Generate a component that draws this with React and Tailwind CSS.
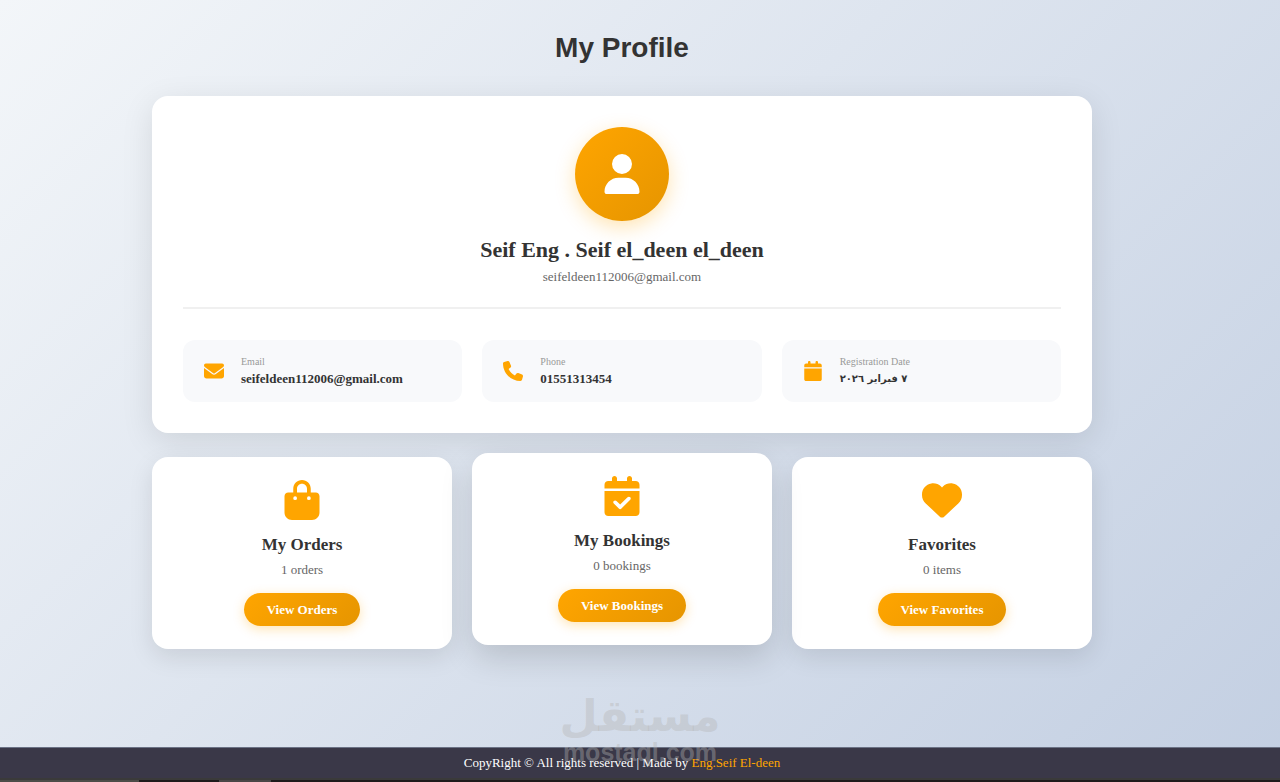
import React from 'react';
import {
  FaUser,
  FaEnvelope,
  FaPhone,
  FaCalendar,
  FaBagShopping,
  FaCalendarCheck,
  FaHeart,
} from 'react-icons/fa6';

const user = {
  name: 'Seif Eng . Seif el_deen el_deen',
  email: 'seifeldeen112006@gmail.com',
  phone: '01551313454',
  registered: '٧ فبراير ٢٠٢٦',
};

const infoItems = [
  { label: 'Email', value: user.email, icon: FaEnvelope },
  { label: 'Phone', value: user.phone, icon: FaPhone },
  { label: 'Registration Date', value: user.registered, icon: FaCalendar, arabic: true },
];

const actions = [
  { title: 'My Orders', count: '1 orders', button: 'View Orders', icon: FaBagShopping },
  { title: 'My Bookings', count: '0 bookings', button: 'View Bookings', icon: FaCalendarCheck, raised: true },
  { title: 'Favorites', count: '0 items', button: 'View Favorites', icon: FaHeart },
];

const InfoItem = ({ item }) => {
  const Icon = item.icon;
  return (
    <div className="flex items-center gap-4 rounded-xl bg-[#f8f9fb] px-5 py-[14px]">
      <div className="flex w-[22px] shrink-0 justify-center">
        <Icon size={20} className="text-[#ffa500]" />
      </div>
      <div className="min-w-0">
        <p className="text-[10px] leading-4 text-[#999]">{item.label}</p>
        {item.arabic ? (
          <p dir="rtl" className="text-left font-['DejaVu_Sans',sans-serif] text-[10px] leading-[18px] font-bold text-[#333]">
            {item.value}
          </p>
        ) : (
          <p className="text-[13px] leading-[18px] font-bold text-[#333]">{item.value}</p>
        )}
      </div>
    </div>
  );
};

const ActionCard = ({ action }) => {
  const Icon = action.icon;
  const state = action.raised
    ? '-translate-y-1 shadow-[0_12px_32px_rgba(0,0,0,0.15)]'
    : 'shadow-[0_8px_24px_rgba(0,0,0,0.1)]';
  return (
    <div className={`flex flex-col items-center rounded-2xl bg-white p-[23px] text-center ${state}`}>
      <Icon size={40} className="text-[#ffa500]" />
      <h3 className="mt-3 text-[17px] leading-[26px] font-bold text-[#333]">{action.title}</h3>
      <p className="mt-[3px] text-[13px] leading-[18px] text-[#666]">{action.count}</p>
      <button
        type="button"
        className="mt-[14px] cursor-pointer rounded-full bg-linear-135 from-[#ffa500] to-[#e69500] px-[23px] py-2 text-[13px] leading-[17px] font-bold text-white shadow-[0_3px_12px_rgba(255,165,0,0.3)]"
      >
        {action.button}
      </button>
    </div>
  );
};

const Watermark = () => (
  <div className="pointer-events-none absolute inset-x-0 bottom-4 flex flex-col items-center font-bold text-[#b4b4b4]/40">
    <span dir="rtl" className="font-['DejaVu_Sans',sans-serif] text-[44px] leading-[44px]">مستقل</span>
    <span className="font-['Liberation_Sans',Arial,sans-serif] text-[25px] leading-7">mostaql.com</span>
  </div>
);

const App = () => {
  return (
    <div className="relative flex min-h-screen flex-col bg-linear-135 from-[#f3f6f9] to-[#c3cfe2] font-['Liberation_Serif','Times_New_Roman',serif]">
      <main className="mr-9 flex-1 px-4 pt-7 pb-10">
        <div className="mx-auto max-w-[940px]">
          <h1 className="text-center font-['Liberation_Sans',Arial,sans-serif] text-[28px] leading-10 font-bold text-[#333]">
            My Profile
          </h1>

          {/* Profile card */}
          <section className="mt-7 rounded-2xl bg-white p-[31px] shadow-[0_8px_32px_rgba(0,0,0,0.1)]">
            <div className="flex flex-col items-center border-b-2 border-[#f0f0f0] pb-5">
              <div className="flex size-[94px] items-center justify-center rounded-full bg-linear-135 from-[#ffa500] to-[#e69500] shadow-[0_6px_20px_rgba(255,165,0,0.3)]">
                <FaUser size={40} className="text-white" />
              </div>
              <h2 className="mt-3 text-[22px] leading-[34px] font-bold text-[#333]">{user.name}</h2>
              <p className="text-[13px] leading-5 text-[#666]">{user.email}</p>
            </div>
            <div className="grid grid-cols-1 gap-5 pt-[31px] md:grid-cols-3">
              {infoItems.map((item) => (
                <InfoItem key={item.label} item={item} />
              ))}
            </div>
          </section>

          <section className="mt-6 grid grid-cols-1 gap-5 md:grid-cols-3">
            {actions.map((action) => (
              <ActionCard key={action.title} action={action} />
            ))}
          </section>
        </div>
      </main>

      <footer className="border-t border-[#6b7285] bg-[#3a3848] text-[13px] text-white">
        <p className="mr-9 py-2 text-center leading-[14px]">
          CopyRight © All rights reserved | Made by{' '}
          <a href="#author" className="text-[#ffa500]">Eng.Seif El-deen</a>
        </p>
        {/* Bottom edge strip */}
        <div className="flex h-1 border-t-2 border-[#3a3a3a] bg-[#1e1a1b]">
          <div className="w-[139px] bg-[#4c4c48]" />
          <div className="ml-20 w-[52px] bg-[#4a4747]" />
        </div>
      </footer>

      <Watermark />
    </div>
  );
};

export default App;
